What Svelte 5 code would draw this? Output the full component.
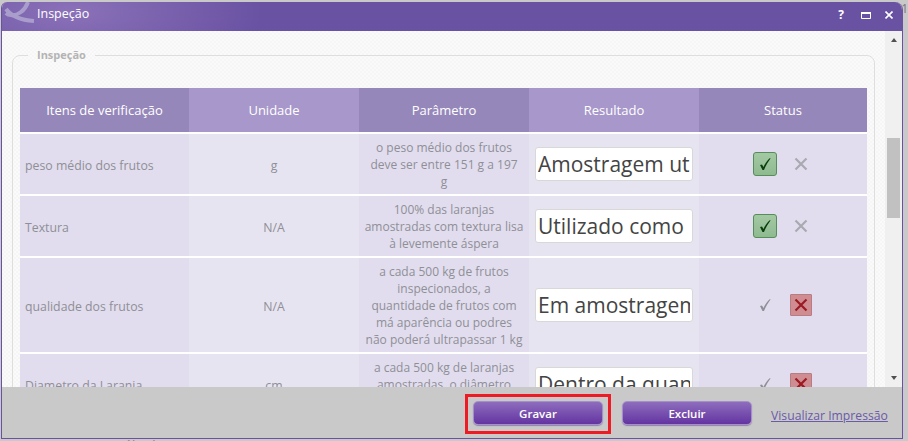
<script lang="ts">
  type Row = {
    item: string;
    unit: string;
    param: string[];
    result: string;
    ok: boolean;
  };

  const columns = ["Itens de verificação", "Unidade", "Parâmetro", "Resultado", "Status"];

  const rows: Row[] = [
    {
      item: "peso médio dos frutos",
      unit: "g",
      param: ["o peso médio dos frutos", "deve ser entre 151 g a 197", "g"],
      result: "Amostragem utilizada",
      ok: true,
    },
    {
      item: "Textura",
      unit: "N/A",
      param: ["100% das laranjas", "amostradas com textura lisa", "à levemente áspera"],
      result: "Utilizado como padrão",
      ok: true,
    },
    {
      item: "qualidade dos frutos",
      unit: "N/A",
      param: [
        "a cada 500 kg de frutos",
        "inspecionados, a",
        "quantidade de frutos com",
        "má aparência ou podres",
        "não poderá ultrapassar 1 kg",
      ],
      result: "Em amostragem realizada",
      ok: false,
    },
    {
      item: "Diametro da Laranja",
      unit: "cm",
      param: ["a cada 500 kg de laranjas", "amostradas, o diâmetro", "deve ser entre 6 cm"],
      result: "Dentro da quantidade",
      ok: false,
    },
  ];
</script>

<div class="page">
  <div class="behind">Cálculo 100 amostras</div>
  <div class="behind-edge">1</div>

  <div class="window">
    <header class="titlebar">
      <svg class="logo" width="32" height="22" viewBox="0 0 32 22">
        <path d="M3 7 C8 14 17 18 31 19" fill="none" stroke="#a99dcc" stroke-width="4" />
        <path d="M25 0 C22 9 14 14 8 13 C6 13 4 12 3 11" fill="none" stroke="#a99dcc" stroke-width="4" />
      </svg>
      <span class="title">Inspeção</span>
      <div class="controls">
        <span class="help">?</span>
        <svg class="max" width="10" height="7" viewBox="0 0 10 7"><path d="M.5 1.5h9v5h-9z" fill="none" stroke="#fff" /><path d="M0 1h10" stroke="#fff" stroke-width="2" /></svg>
        <svg width="8" height="8" viewBox="0 0 8 8"><path d="M.5.5l7 7M7.5.5l-7 7" stroke="#fff" stroke-width="1.6" /></svg>
      </div>
    </header>

    <div class="body">
      <div class="scroll-content">
        <fieldset class="group">
          <legend>Inspeção</legend>
          <table>
            <colgroup>
              <col style="width: 169px" />
              <col style="width: 170px" />
              <col style="width: 170px" />
              <col style="width: 170px" />
              <col style="width: 168px" />
            </colgroup>
            <thead>
              <tr>
                {#each columns as col}
                  <th>{col}</th>
                {/each}
              </tr>
            </thead>
            <tbody>
              {#each rows as row}
                <tr>
                  <td class="item"><span class="nudge">{row.item}</span></td>
                  <td><span class="nudge">{row.unit}</span></td>
                  <td class="param">
                    {#each row.param as line}
                      <div>{line}</div>
                    {/each}
                  </td>
                  <td><input type="text" value={row.result} readonly /></td>
                  <td>
                    <div class="status">
                      <span class="toggle" class:on-ok={row.ok}>
                        <svg width="16" height="16" viewBox="0 0 16 16">
                          <path
                            d="M3 9 L5 8.5 L6.5 11 C8 7.5 10 4.5 13 2 L13.5 2.5 C11 6 8.5 10 7 14 L5.5 14 Z"
                            fill={row.ok ? "#0b400e" : "#8f8f96"}
                          />
                        </svg>
                      </span>
                      <span class="toggle" class:on-bad={!row.ok}>
                        <svg width="14" height="14" viewBox="0 0 14 14">
                          <path
                            d="M1.5 1.5l11 11M12.5 1.5l-11 11"
                            fill="none"
                            stroke={row.ok ? "#a9a9b0" : "#9c1a22"}
                            stroke-width="2.2"
                          />
                        </svg>
                      </span>
                    </div>
                  </td>
                </tr>
              {/each}
            </tbody>
          </table>
        </fieldset>
      </div>

      <div class="scrollbar">
        <span class="arrow up"></span>
        <div class="track"><div class="thumb"></div></div>
        <span class="arrow down"></span>
      </div>
    </div>

    <footer class="actions">
      <div class="highlight"><button>Gravar</button></div>
      <button>Excluir</button>
      <a href="#print">Visualizar Impressão</a>
    </footer>
  </div>
</div>

<style>
  :global(body) {
    margin: 0;
    overflow: hidden;
  }

  .page {
    position: relative;
    width: 908px;
    height: 441px;
    overflow: hidden;
    background: #c9c9c9;
    font-family: "Open Sans", "Noto Sans", sans-serif;
  }

  .behind {
    position: absolute;
    left: 114px;
    top: 435px;
    font-size: 15px;
    color: #8b8b8b;
  }

  .behind-edge {
    position: absolute;
    right: 0;
    top: 0;
    font-size: 12px;
    color: #777;
  }

  .window {
    position: absolute;
    left: 1px;
    top: 2px;
    width: 900px;
    height: 436px;
    border: 1px solid #6a52a3;
    border-top: 0;
    border-radius: 6px 8px 0 0;
    display: flex;
    flex-direction: column;
    overflow: hidden;
    background: #f7f7f7;
  }

  .titlebar {
    height: 29px;
    flex: none;
    display: flex;
    align-items: center;
    padding-left: 35px;
    position: relative;
    background: radial-gradient(ellipse 190px 70px at 70px 10px, #8a71b8 0%, #6a52a3 100%);
    color: #fff;
  }

  .logo {
    position: absolute;
    left: 1px;
    top: 0;
  }

  .title {
    font-size: 12.5px;
    margin-top: -7px;
  }

  .controls {
    margin-left: auto;
    margin-right: 9px;
    margin-top: -3px;
    display: flex;
    align-items: center;
    gap: 14px;
  }

  .help {
    font-size: 12px;
    font-weight: 700;
    line-height: 12px;
    margin-right: 3px;
  }

  .body {
    flex: 1;
    min-height: 0;
    display: flex;
    background: repeating-conic-gradient(#f6f6f6 0 25%, #fafafa 0 50%) 0 0 / 4px 4px;
  }

  .scroll-content {
    flex: 1;
    min-width: 0;
    overflow: hidden;
    padding: 16px 10px 0 10px;
  }

  .group {
    margin: 0;
    padding: 25px 7px 0;
    border: 1px solid #dedede;
    border-radius: 8px;
    min-width: 0;
  }

  legend {
    margin-left: 8px;
    padding: 0 9px;
    font-size: 11px;
    font-weight: 700;
    color: #b4b4b4;
    line-height: 16px;
  }

  table {
    width: 847px;
    table-layout: fixed;
    border-collapse: collapse;
    color: #8f8f96;
    font-size: 12.3px;
  }

  th {
    height: 44px;
    padding: 0;
    font-size: 13px;
    font-weight: 400;
    color: #fff;
    background: #9687ba;
    border-bottom: 2px solid #fff;
  }

  th:nth-child(even) {
    background: #a797ca;
  }

  td {
    padding: 0;
    text-align: center;
    background: #e7e4f2;
    border-bottom: 2px solid #fff;
  }

  td:nth-child(odd) {
    background: #e1ddee;
  }

  td.item {
    text-align: left;
    padding-left: 5px;
  }

  /* item and unit sit a pixel below the cell's middle */
  .nudge {
    display: block;
    padding-top: 2px;
  }

  td.param {
    padding: 4.5px 0;
    line-height: 17px;
    font-size: 12px;
  }

  input {
    display: block;
    box-sizing: border-box;
    width: 158px;
    height: 34px;
    margin: 0 auto 0 6px;
    padding: 0 2px;
    border: 1px solid #d8d8d8;
    border-radius: 3px;
    background: #fff;
    font-family: inherit;
    font-size: 21px;
    color: #444;
    outline: none;
  }

  .status {
    display: flex;
    align-items: center;
    justify-content: center;
    gap: 12px;
  }

  .toggle {
    box-sizing: border-box;
    width: 24px;
    height: 24px;
    display: flex;
    align-items: center;
    justify-content: center;
    border: 1px solid transparent;
    border-radius: 3px;
  }

  .on-ok {
    background: linear-gradient(#a3c9a3, #8fba90);
    border-color: #558e5a;
  }

  .on-bad {
    width: 22px;
    height: 22px;
    margin: 1px;
    background: #cf8d92;
    border-color: #b77d82;
    border-radius: 1px;
  }

  .scrollbar {
    width: 17px;
    flex: none;
    display: flex;
    flex-direction: column;
    align-items: center;
    background: #f0f0f0;
  }

  .arrow {
    flex: none;
    width: 0;
    height: 0;
    border-left: 3.5px solid transparent;
    border-right: 3.5px solid transparent;
  }

  .arrow.up {
    margin-top: 7px;
    border-bottom: 4px solid #505050;
  }

  .arrow.down {
    margin-bottom: 7px;
    border-top: 4px solid #505050;
  }

  .track {
    flex: 1;
    width: 100%;
  }

  .thumb {
    width: 13px;
    height: 80px;
    margin: 96px auto 0;
    background: #c1c1c1;
  }

  .actions {
    height: 51px;
    flex: none;
    display: flex;
    align-items: flex-start;
    box-sizing: border-box;
    padding: 7px 0 0 463px;
    background: #c9c9c9;
    position: relative;
  }

  .highlight {
    padding: 4px 5px 6px;
    border: 3px solid #ed1c24;
    margin-right: 11px;
    line-height: 0;
  }

  .actions > button {
    margin-top: 7px;
  }

  button {
    box-sizing: border-box;
    width: 130px;
    height: 24px;
    padding: 0;
    border: 1px solid #a48fcb;
    border-radius: 5px;
    background: linear-gradient(#8d6dbd, #6434a1);
    color: #fff;
    font-family: inherit;
    font-size: 11.5px;
    font-weight: 600;
    box-shadow: 0 1px 1px rgba(90, 60, 140, 0.5);
  }

  a {
    margin: 13px 0 0 19px;
    color: #6a5aa8;
    font-size: 12.2px;
    white-space: nowrap;
  }
</style>
